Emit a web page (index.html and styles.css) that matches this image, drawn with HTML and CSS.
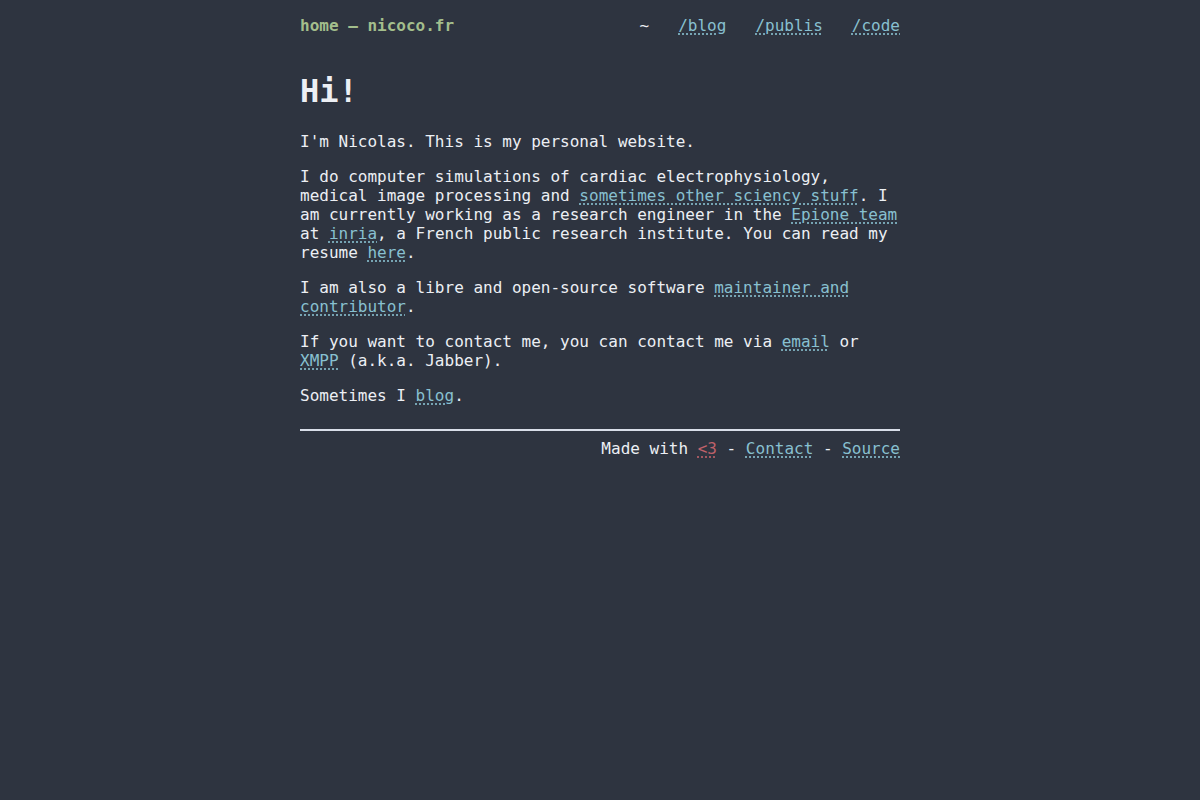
FILE: index.html
```html
<!DOCTYPE html>
<html lang="en">
<head>
<meta charset="utf-8">
<title>home — nicoco.fr</title>
<link rel="stylesheet" href="styles.css">
</head>
<body>
<div class="page">
  <header class="site-header">
    <a class="brand" href="#">home — nicoco.fr</a>
    <nav class="nav">
      <span class="tilde">~</span>
      <a class="link" href="#">/blog</a>
      <a class="link" href="#">/publis</a>
      <a class="link" href="#">/code</a>
    </nav>
  </header>
  <main class="content">
    <h1 class="title">Hi!</h1>
    <p>I'm Nicolas. This is my personal website.</p>
    <p>I do computer simulations of cardiac electrophysiology, medical image processing and <a class="link" href="#">sometimes other sciency stuff</a>. I am currently working as a research engineer in the <a class="link" href="#">Epione team</a> at <a class="link" href="#">inria</a>, a French public research institute. You can read my resume <a class="link" href="#">here</a>.</p>
    <p>I am also a libre and open-source software <a class="link" href="#">maintainer and contributor</a>.</p>
    <p>If you want to contact me, you can contact me via <a class="link" href="#">email</a> or <a class="link" href="#">XMPP</a> (a.k.a. Jabber).</p>
    <p>Sometimes I <a class="link" href="#">blog</a>.</p>
  </main>
  <footer class="site-footer">
    <hr class="rule">
    <p class="footer-text">Made with <a class="heart" href="#">&lt;3</a> - <a class="link" href="#">Contact</a> - <a class="link" href="#">Source</a></p>
  </footer>
</div>
</body>
</html>
```

FILE: styles.css
```css
html, body {
  margin: 0;
  padding: 0;
  background: #2e3440;
}
body {
  color: #eceff4;
  font-family: "DejaVu Sans Mono", "Liberation Mono", monospace;
  font-size: 16px;
  line-height: 19px;
}
.page {
  width: 600px;
  margin: 0 auto;
}
.site-header {
  display: flex;
  justify-content: space-between;
  align-items: center;
  padding-top: 16px;
}
.brand {
  color: #a3be8c;
  font-weight: bold;
  text-decoration: none;
}
.nav {
  display: flex;
  gap: 29px;
}
.tilde {
  color: #eceff4;
}
.link {
  color: #88c0d0;
  text-decoration: underline dotted;
  text-underline-offset: 3px;
}
.heart {
  color: #bf616a;
  text-decoration: underline dotted;
  text-underline-offset: 3px;
}
.content {
  margin-top: 37px;
}
.title {
  font-size: 32px;
  line-height: 38px;
  font-weight: bold;
  margin: 0 0 22px 0;
}
.content p {
  margin: 0 0 16px 0;
}
.site-footer {
  margin-top: 24px;
}
.rule {
  border: 0;
  border-top: 2px solid #d8dee9;
  margin: 0;
}
.footer-text {
  text-align: right;
  margin: 8px 0 0 0;
}
```
